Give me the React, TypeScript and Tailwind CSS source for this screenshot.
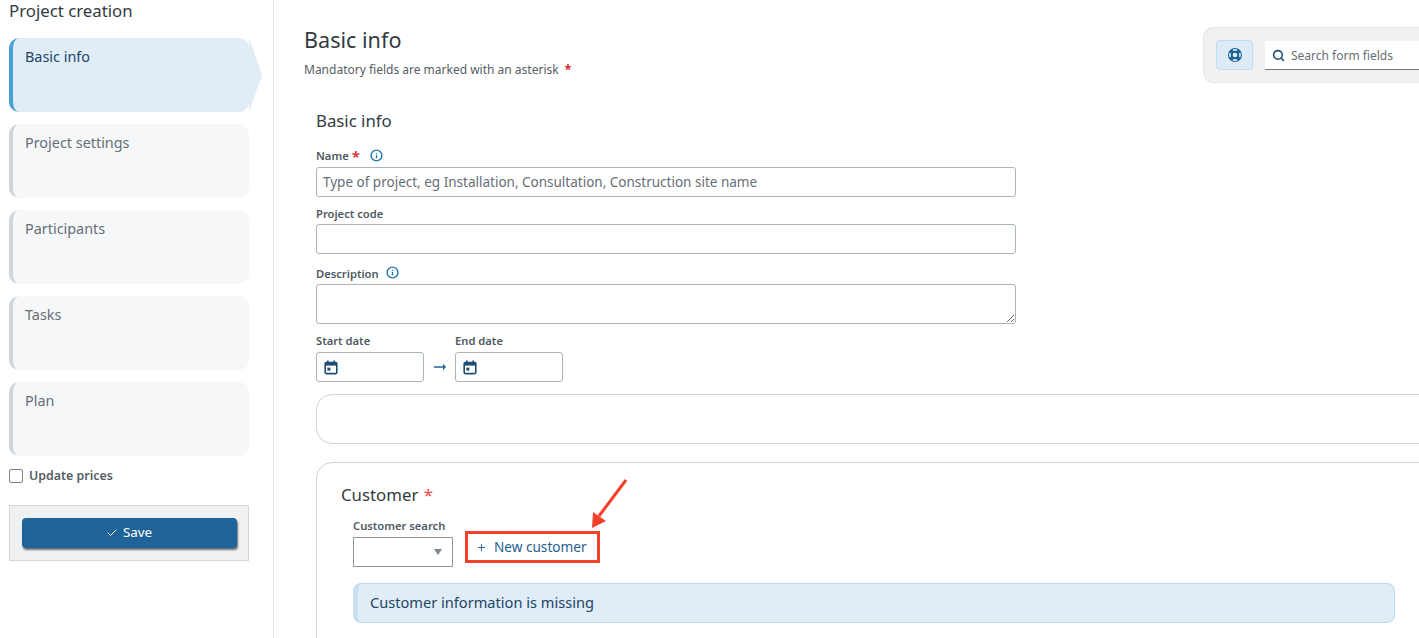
import { Check, Info, Plus, Search } from 'lucide-react'

const steps = ['Project settings', 'Participants', 'Tasks', 'Plan']

function Req({ className = '' }: { className?: string }) {
  return <span className={`text-[#e0242c] ${className}`}>*</span>
}

function CalendarIcon() {
  return (
    <svg width="14" height="15" viewBox="0 0 14 15" className="text-[#1f4e75]">
      <path d="M3 0.5h1.6v2H3zM9.4 0.5H11v2H9.4z" fill="currentColor" />
      <rect x="1.2" y="2.6" width="11.6" height="11" rx="1" fill="none" stroke="currentColor" strokeWidth="1.6" />
      <rect x="1.2" y="2.6" width="11.6" height="3" fill="currentColor" />
      <rect x="3.4" y="7.6" width="3" height="3" fill="currentColor" />
    </svg>
  )
}

function DateField({ label }: { label: string }) {
  return (
    <div>
      <div className="mb-[4px] text-[11.2px] leading-[15px] font-semibold text-[#4f5963]">{label}</div>
      <div className="flex h-[30px] w-[108px] items-center rounded-[3px] border border-[#aab4bb] bg-white pl-[7px]">
        <CalendarIcon />
      </div>
    </div>
  )
}

export default function App() {
  return (
    <div className="flex h-[638px] w-[1419px] overflow-hidden bg-white font-['Noto_Sans',sans-serif] text-[#2f3a42]">
      {/* steps */}
      <aside className="flex h-full w-[274px] shrink-0 flex-col border-r border-[#e4e7ea] pr-[24px] pl-[9px]">
        <div className="h-[38px] text-[16.8px] leading-[22px] text-[#333b42]">Project creation</div>
        <div className="relative h-[74px] w-[240px] rounded-[10px] border-l-4 border-[#4a9fd6] bg-[#e0ecf6] pt-[9px] pl-[12px] text-[14.4px] leading-[20px] text-[#1d4567]">
          Basic info
          <svg className="absolute top-0 left-[236px]" width="17" height="74" viewBox="0 0 17 74">
            <path d="M0 0 L13 37 L0 74 Z" fill="#e0ecf6" />
          </svg>
        </div>
        {steps.map((s) => (
          <div
            key={s}
            className="mt-[12px] h-[74px] w-[240px] rounded-[10px] border-l-4 border-[#cfd6db] bg-[#f6f7f9] pt-[9px] pl-[12px] text-[14.4px] leading-[20px] text-[#666e75]"
          >
            {s}
          </div>
        ))}
        <label className="mt-[12px] flex h-[16px] items-center gap-[6px] text-[12.4px] font-semibold text-[#555e66]">
          <span className="h-[14px] w-[14px] rounded-[2px] border border-[#7d868d] bg-white" />
          Update prices
        </label>
        <div className="mt-[21px] flex h-[56px] w-[240px] items-center justify-center border border-[#d3d7da] bg-[#eff1f3]">
          <button className="flex h-[30px] w-[215px] items-center justify-center gap-[5px] rounded-[4px] bg-[#1f6498] pb-[1px] text-[13.4px] text-white shadow-[1px_2px_2px_rgba(0,0,0,0.55)]">
            <Check size={12} />
            Save
          </button>
        </div>
      </aside>

      {/* form */}
      <main className="relative min-w-0 flex-1 pl-[30px]">
        <div className="flex items-start justify-between">
          <div className="pt-[25px]">
            <h1 className="text-[21.6px] leading-[30px] text-[#333b42]">Basic info</h1>
            <p className="mt-[7px] text-[12px] leading-[16px] text-[#555e66]">
              Mandatory fields are marked with an asterisk <Req className="ml-[3px] font-bold" />
            </p>
          </div>
          <div className="mt-[27px] flex h-[56px] w-[216px] items-center gap-[12px] rounded-l-[10px] border border-r-0 border-[#e4e7ea] bg-[#eff1f3] pl-[12px]">
            <div className="flex h-[30px] w-[37px] items-center justify-center rounded-[4px] border border-[#bcdcf0] bg-[#dcebf6]">
              <svg width="16" height="16" viewBox="0 0 16 16">
                <circle cx="8" cy="8" r="7" fill="#1f6498" />
                <circle cx="8" cy="8" r="2.3" fill="#dcebf6" />
                <path
                  d="M6 3.3 A5 5 0 0 1 10 3.3 M12.7 6 A5 5 0 0 1 12.7 10 M10 12.7 A5 5 0 0 1 6 12.7 M3.3 10 A5 5 0 0 1 3.3 6"
                  fill="none"
                  stroke="#dcebf6"
                  strokeWidth="1.7"
                />
              </svg>
            </div>
            <div className="flex h-[29px] flex-1 items-center gap-[6px] border-b border-[#717b83] bg-white pt-[2px] pl-[7px] text-[12px] text-[#666e75]">
              <Search size={13} strokeWidth={2.8} className="text-[#1f4e75]" />
              Search form fields
            </div>
          </div>
        </div>

        <div className="pt-[27px] pl-[12px]">
          <h2 className="text-[16.8px] leading-[22px] text-[#333b42]">Basic info</h2>
          <div className="mt-[16px] flex h-[16px] items-center text-[11.2px] font-semibold text-[#4f5963]">
            Name <Req className="ml-[3px] text-[15px] leading-[15px]" />
            <Info size={13} strokeWidth={2.6} className="relative top-[-1px] ml-[10px] text-[#1f77b4]" />
          </div>
          <div className="mt-[3px] flex h-[30px] w-[700px] items-center rounded-[3px] border border-[#aab4bb] bg-white pt-[1px] pl-[6px] text-[13.5px] text-[#666e75]">
            Type of project, eg Installation, Consultation, Construction site name
          </div>
          <div className="mt-[9px] text-[11.2px] leading-[15px] font-semibold text-[#4f5963]">Project code</div>
          <div className="mt-[3px] h-[30px] w-[700px] rounded-[3px] border border-[#aab4bb] bg-white" />
          <div className="mt-[12px] flex h-[16px] items-center text-[11.2px] font-semibold text-[#4f5963]">
            Description
            <Info size={13} strokeWidth={2.6} className="relative top-[-2px] ml-[7px] text-[#1f77b4]" />
          </div>
          <textarea className="mt-[2px] block h-[40px] w-[700px] rounded-[3px] border border-[#aab4bb] bg-white" />
          <div className="mt-[9px] flex items-end">
            <DateField label="Start date" />
            <div className="flex h-[30px] w-[31px] items-center justify-center">
              <svg width="12" height="8" viewBox="0 0 12 8" className="text-[#1f6498]">
                <path d="M0 3.3h9V0.8L12 4 9 7.2V4.7H0z" fill="currentColor" />
              </svg>
            </div>
            <DateField label="End date" />
          </div>

          <div className="mt-[12px] h-[50px] w-[1200px] rounded-[16px] border border-[#cdd4d9] bg-white" />

          <section className="mt-[18px] h-[300px] w-[1200px] rounded-[16px] border border-[#cdd4d9] bg-white pt-[21px] pl-[24px]">
            <div className="text-[16.8px] leading-[22px] text-[#333b42]">
              Customer <Req className="ml-[1px] text-[#f0483e]" />
            </div>
            <div className="mt-[12px] flex items-end pl-[12px]">
              <div>
                <div className="mb-[4px] text-[11.2px] leading-[15px] font-semibold text-[#4f5963]">Customer search</div>
                <div className="flex h-[30px] w-[100px] items-center justify-end border border-[#8f979d] bg-white pr-[10px]">
                  <span className="h-0 w-0 border-x-[4px] border-t-[6px] border-x-transparent border-t-[#7d868d]" />
                </div>
              </div>
              <button className="mb-[4px] ml-[12px] flex h-[32px] w-[135px] items-center gap-[7px] border-[3px] border-[#f4402a] pl-[8px] text-[13.6px] text-[#1f5f8f]">
                <Plus size={11} />
                New customer
              </button>
            </div>
            <div className="mt-[16px] ml-[12px] flex h-[40px] w-[1042px] items-center rounded-[8px] border border-[#b9dcf2] border-l-[5px] border-l-[#c9e0f0] bg-[#e0ecf6] pl-[12px] text-[14.6px] text-[#1d4567]">
              Customer information is missing
            </div>
          </section>
        </div>

        {/* annotation arrow */}
        <svg className="absolute top-[478px] left-[312px]" width="44" height="52" viewBox="0 0 44 52">
          <path d="M40 2 L13 38" stroke="#f4402a" strokeWidth="3" fill="none" />
          <path d="M6 50 L7 34 L20 43 Z" fill="#f4402a" />
        </svg>
      </main>
    </div>
  )
}
